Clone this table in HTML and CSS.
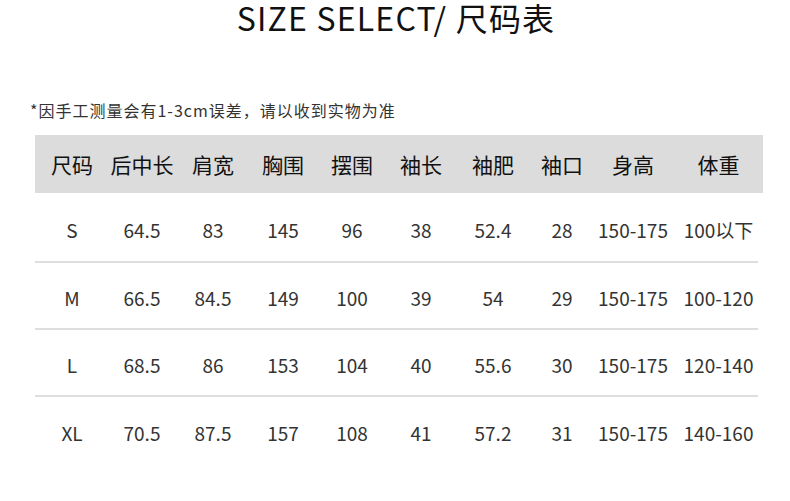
FILE: index.html
```html
<!DOCTYPE html>
<html lang="zh">
<head>
<meta charset="utf-8">
<link rel="stylesheet" href="styles.css">
</head>
<body>
<div class="page">
  <h1 class="title">SIZE SELECT/ 尺码表</h1>
  <p class="note">*因手工测量会有1-3cm误差，请以收到实物为准</p>
  <div class="table">
    <div class="row head">
      <span>尺码</span><span>后中长</span><span>肩宽</span><span>胸围</span><span>摆围</span><span>袖长</span><span>袖肥</span><span>袖口</span><span>身高</span><span>体重</span>
    </div>
    <div class="row first">
      <span>S</span><span>64.5</span><span>83</span><span>145</span><span>96</span><span>38</span><span>52.4</span><span>28</span><span>150-175</span><span>100以下</span>
    </div>
    <div class="row">
      <span>M</span><span>66.5</span><span>84.5</span><span>149</span><span>100</span><span>39</span><span>54</span><span>29</span><span>150-175</span><span>100-120</span>
    </div>
    <div class="row">
      <span>L</span><span>68.5</span><span>86</span><span>153</span><span>104</span><span>40</span><span>55.6</span><span>30</span><span>150-175</span><span>120-140</span>
    </div>
    <div class="row last">
      <span>XL</span><span>70.5</span><span>87.5</span><span>157</span><span>108</span><span>41</span><span>57.2</span><span>31</span><span>150-175</span><span>140-160</span>
    </div>
  </div>
</div>
</body>
</html>
```
FILE: styles.css
```css
html, body {
  margin: 0;
  padding: 0;
  background: #fff;
}
body {
  font-family: "Noto Sans CJK SC", "Noto Sans", sans-serif;
  color: #222;
}
.page {
  width: 790px;
  height: 501px;
  overflow: hidden;
}
.title {
  margin: 0;
  height: 36px;
  line-height: 34px;
  font-size: 32px;
  font-weight: 400;
  letter-spacing: 1.2px;
  text-align: center;
  color: #111;
  padding-left: 2px;
}
.note {
  margin: 0;
  padding: 64px 0 0 30px;
  height: 20px;
  line-height: 20px;
  font-size: 16px;
  letter-spacing: 1px;
  color: #333;
}
.table {
  margin: 15px 0 0 35px;
  width: 728px;
}
.row {
  display: grid;
  grid-template-columns: 74px 66px 76px 64px 74px 64px 80px 58px 84px 87px;
  align-items: center;
  box-sizing: border-box;
  height: 67px;
  padding-top: 4px;
  border-bottom: 2px solid #dedede;
  margin-right: 5px;
  font-size: 19px;
  color: #333;
}
.row.first {
  height: 70px;
}
.row span {
  text-align: center;
  white-space: nowrap;
}
.row.head {
  height: 58px;
  padding-top: 0;
  background: #dcdcdc;
  border-bottom: 0;
  margin-right: 0;
  font-size: 21px;
  color: #111;
}
.row.last {
  border-bottom: 0;
}
```
